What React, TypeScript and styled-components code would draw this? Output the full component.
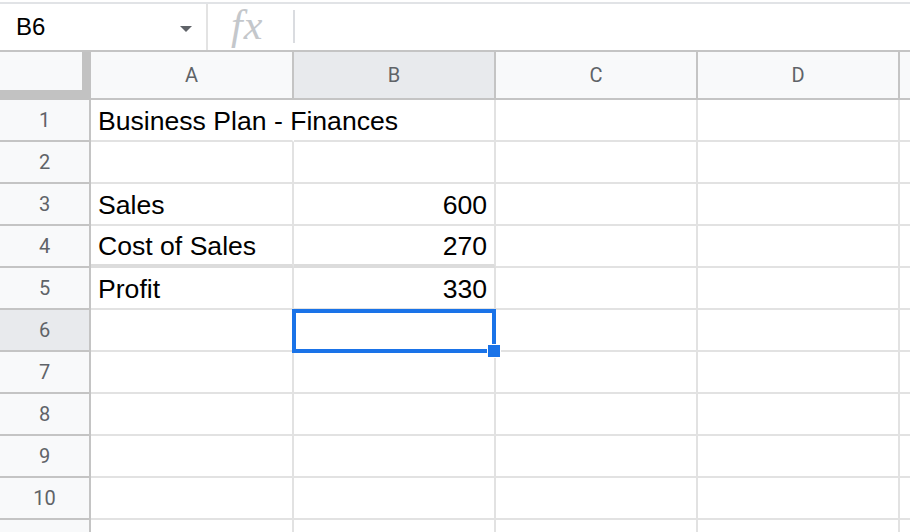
import { FC } from 'react';
import styled, { createGlobalStyle, css } from 'styled-components';

const GlobalStyle = createGlobalStyle`
  body {
    margin: 0;
    background: #ffffff;
    font-family: 'Liberation Sans', Arial, sans-serif;
  }
`;

const Page = styled.div`
  width: 910px;
  height: 532px;
  overflow: hidden;
  background: #ffffff;
`;

const FormulaBar = styled.div`
  box-sizing: border-box;
  display: flex;
  align-items: stretch;
  height: 50px;
  margin-top: 2px;
  border-top: 2px solid #e1e3e6;
  border-bottom: 2px solid #c4c4c4;
`;

const NameBox = styled.div`
  box-sizing: border-box;
  width: 206px;
  display: flex;
  align-items: center;
  justify-content: space-between;
  padding: 0 14px 0 16px;
  font-size: 24px;
  color: #000000;
`;

const DropArrow = styled.span`
  width: 0;
  height: 0;
  margin-top: 4px;
  border-left: 6px solid transparent;
  border-right: 6px solid transparent;
  border-top: 6px solid #5f6368;
`;

const Divider = styled.div<{ $short?: boolean }>`
  width: 2px;
  background: #e3e3e3;
  ${({ $short }) =>
    $short &&
    css`
      margin: 6px 0 7px;
      background: #dadce0;
    `}
`;

const FxLabel = styled.div`
  display: flex;
  align-items: center;
  width: 85px;
  box-sizing: border-box;
  padding: 0 0 4px 23px;
  font-family: 'Liberation Serif', 'Times New Roman', serif;
  font-style: italic;
  font-size: 42px;
  color: #c4c7cb;
  letter-spacing: 1px;
`;

const Grid = styled.div`
  display: grid;
  grid-template-columns: 91px 203px 202px 202px 202px 1fr;
  grid-template-rows: 48px repeat(11, 42px);
`;

const headerBase = css`
  box-sizing: border-box;
  display: flex;
  align-items: center;
  justify-content: center;
  font-family: Roboto, 'Liberation Sans', sans-serif;
  font-size: 20px;
  color: #5f6368;
  border-right: 2px solid #c4c4c4;
  border-bottom: 2px solid #c4c4c4;
`;

const Corner = styled.div`
  box-sizing: border-box;
  background: #f8f9fa;
  border-right: 9px solid #c2c2c2;
  border-bottom: 10px solid #c2c2c2;
`;

const ColHeader = styled.div<{ $selected?: boolean }>`
  ${headerBase};
  background: ${({ $selected }) => ($selected ? '#e8eaed' : '#f8f9fa')};
`;

const RowHeader = styled.div<{ $selected?: boolean }>`
  ${headerBase};
  background: ${({ $selected }) => ($selected ? '#e8eaed' : '#f8f9fa')};
`;

const Cell = styled.div<{ $right?: boolean; $spill?: boolean; $heavy?: boolean; $active?: boolean }>`
  position: relative;
  box-sizing: border-box;
  display: flex;
  align-items: center;
  justify-content: ${({ $right }) => ($right ? 'flex-end' : 'flex-start')};
  padding: 2px 7px 0;
  font-size: 26.6px;
  color: #000000;
  white-space: nowrap;
  border-right: 2px solid ${({ $spill }) => ($spill ? 'transparent' : '#e2e2e2')};
  border-bottom: ${({ $heavy }) => ($heavy ? '4px solid #dcdcdc' : '2px solid #e2e2e2')};
  overflow: visible;
  z-index: ${({ $spill, $active }) => ($active ? 5 : $spill ? 1 : 0)};
`;

const Selection = styled.div`
  position: absolute;
  left: -2px;
  top: -1px;
  width: 204px;
  height: 44px;
  box-sizing: border-box;
  border: 4px solid #1a73e8;
`;

const FillHandle = styled.div`
  position: absolute;
  left: 193px;
  top: 34px;
  width: 12px;
  height: 12px;
  background: #1a73e8;
  border: 1px solid #ffffff;
`;

type Row = { a?: string; b?: string; spill?: boolean; heavy?: boolean };

const rows: Row[] = [
  { a: 'Business Plan - Finances', spill: true },
  {},
  { a: 'Sales', b: '600' },
  { a: 'Cost of Sales', b: '270', heavy: true },
  { a: 'Profit', b: '330' },
  {},
  {},
  {},
  {},
  {},
  {},
];

const columns = ['A', 'B', 'C', 'D', ''];
const selectedRow = 6;

const App: FC = () => (
  <Page>
    <GlobalStyle />
    <FormulaBar>
      <NameBox>
        B6
        <DropArrow />
      </NameBox>
      <Divider />
      <FxLabel>fx</FxLabel>
      <Divider $short />
    </FormulaBar>
    <Grid>
      <Corner />
      {columns.map((c, i) => (
        <ColHeader key={i} $selected={c === 'B'}>
          {c}
        </ColHeader>
      ))}
      {rows.map((r, i) => {
        const n = i + 1;
        const active = n === selectedRow;
        return [
          <RowHeader key={`h${n}`} $selected={active}>
            {n <= 10 ? n : ''}
          </RowHeader>,
          <Cell key={`a${n}`} $spill={r.spill} $heavy={r.heavy}>
            {r.a}
          </Cell>,
          <Cell key={`b${n}`} $right $heavy={r.heavy} $active={active}>
            {r.b}
            {active && (
              <>
                <Selection />
                <FillHandle />
              </>
            )}
          </Cell>,
          <Cell key={`c${n}`} />,
          <Cell key={`d${n}`} />,
          <Cell key={`e${n}`} />,
        ];
      })}
    </Grid>
  </Page>
);

export default App;
